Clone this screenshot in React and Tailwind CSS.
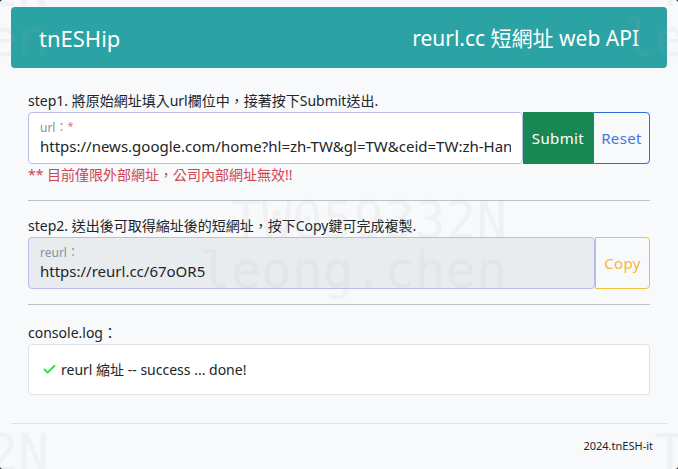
import React, { useState } from "react";
import { Check } from "lucide-react";

function Watermark({ className }) {
  return (
    <div
      aria-hidden="true"
      className={`pointer-events-none absolute text-right font-['DejaVu_Sans_Mono','Liberation_Mono',monospace] text-[51px] leading-[50px] font-extralight whitespace-pre text-[#b4b4b4]/10 select-none ${className}`}
    >
      <div>TW059332N</div>
      <div>leong.chen</div>
    </div>
  );
}

function Field({ id, label, required, value, onChange, readOnly, className }) {
  return (
    <div className={`flex min-w-0 flex-1 flex-col rounded-[4px] border border-[#bdbaea] px-[11px] pt-[7px] ${className}`}>
      <label htmlFor={id} className="flex h-4 items-center text-[12px] leading-4 text-[#8b8f93]">
        {label}
        {required && <span className="-mt-1 h-4 text-[11px] leading-4 text-[#e87078]">*</span>}
      </label>
      <input
        id={id}
        value={value}
        onChange={onChange}
        readOnly={readOnly}
        className="h-5 w-full bg-transparent text-[15px] leading-5 text-[#212529] outline-none"
      />
    </div>
  );
}

export default function App() {
  const [url, setUrl] = useState("https://news.google.com/home?hl=zh-TW&gl=TW&ceid=TW:zh-Hant");
  return (
    <div className="bg-[#1b2a35]">
      <div className="relative flex min-h-screen flex-col overflow-hidden rounded-[3px] bg-[#f8f9fb] px-[11px] pt-[7px] font-['Noto_Sans','Noto_Sans_CJK_TC',sans-serif] text-[14px] leading-[22px] text-[#212529]">
        <header className="flex h-[61px] items-center justify-between rounded-[4px] bg-[#2ba2a3] px-7 text-white">
          <h1 className="text-[22px]">tnESHip</h1>
          <h2 className="text-[21px]">reurl.cc 短網址 web API</h2>
        </header>

        <main className="px-[17px] pt-[22px]">
          <form onSubmit={(e) => e.preventDefault()}>
            <p>step1. 將原始網址填入url欄位中，接著按下Submit送出.</p>
            <div className="flex h-[52px]">
              <Field id="url" label="url：" required value={url} onChange={(e) => setUrl(e.target.value)} className="bg-white" />
              <button type="submit" className="w-[70px] bg-[#198754] text-[15px] tracking-wide text-white">
                Submit
              </button>
              <button
                type="button"
                onClick={() => setUrl("")}
                className="w-[57px] rounded-r-[4px] border border-[#2a6fd0] text-[15px] tracking-wide text-[#3f78e0]"
              >
                Reset
              </button>
            </div>
            <p className="text-[#cf4550]">** 目前僅限外部網址，公司內部網址無效!!</p>
          </form>

          <hr className="my-[14px] border-[#bfc1c5]" />

          <p>step2. 送出後可取得縮址後的短網址，按下Copy鍵可完成複製.</p>
          <div className="flex h-[52px]">
            <Field id="reurl" label="reurl：" value="https://reurl.cc/67oOR5" readOnly className="bg-[#e9ecef]" />
            <button
              type="button"
              className="w-[55px] rounded-r-[4px] border border-[#f0bf3a] text-[15px] tracking-wide text-[#f5b540]"
            >
              Copy
            </button>
          </div>

          <hr className="mt-[15px] mb-[17px] border-[#bfc1c5]" />

          <p>console.log：</p>
          <div className="flex h-[51px] items-center rounded-[4px] border border-[#dee2e6] bg-white px-[13px]">
            <Check className="mr-1 h-[15px] w-[15px] text-[#2fe043]" strokeWidth={3} />
            <span>reurl 縮址 -- success ... done!</span>
          </div>
        </main>

        <footer className="mt-7 border-t border-[#dee2e6] px-[14px] pt-[11px] pb-3 text-right text-[11px]">2024.tnESH-it</footer>

        <Watermark className="top-[-36px] right-[629px]" />
        <Watermark className="top-[-36px] left-[624px]" />
        <Watermark className="top-[196px] right-[171px]" />
        <Watermark className="top-[429px] right-[629px]" />
        <Watermark className="top-[429px] left-[624px]" />
      </div>
    </div>
  );
}
